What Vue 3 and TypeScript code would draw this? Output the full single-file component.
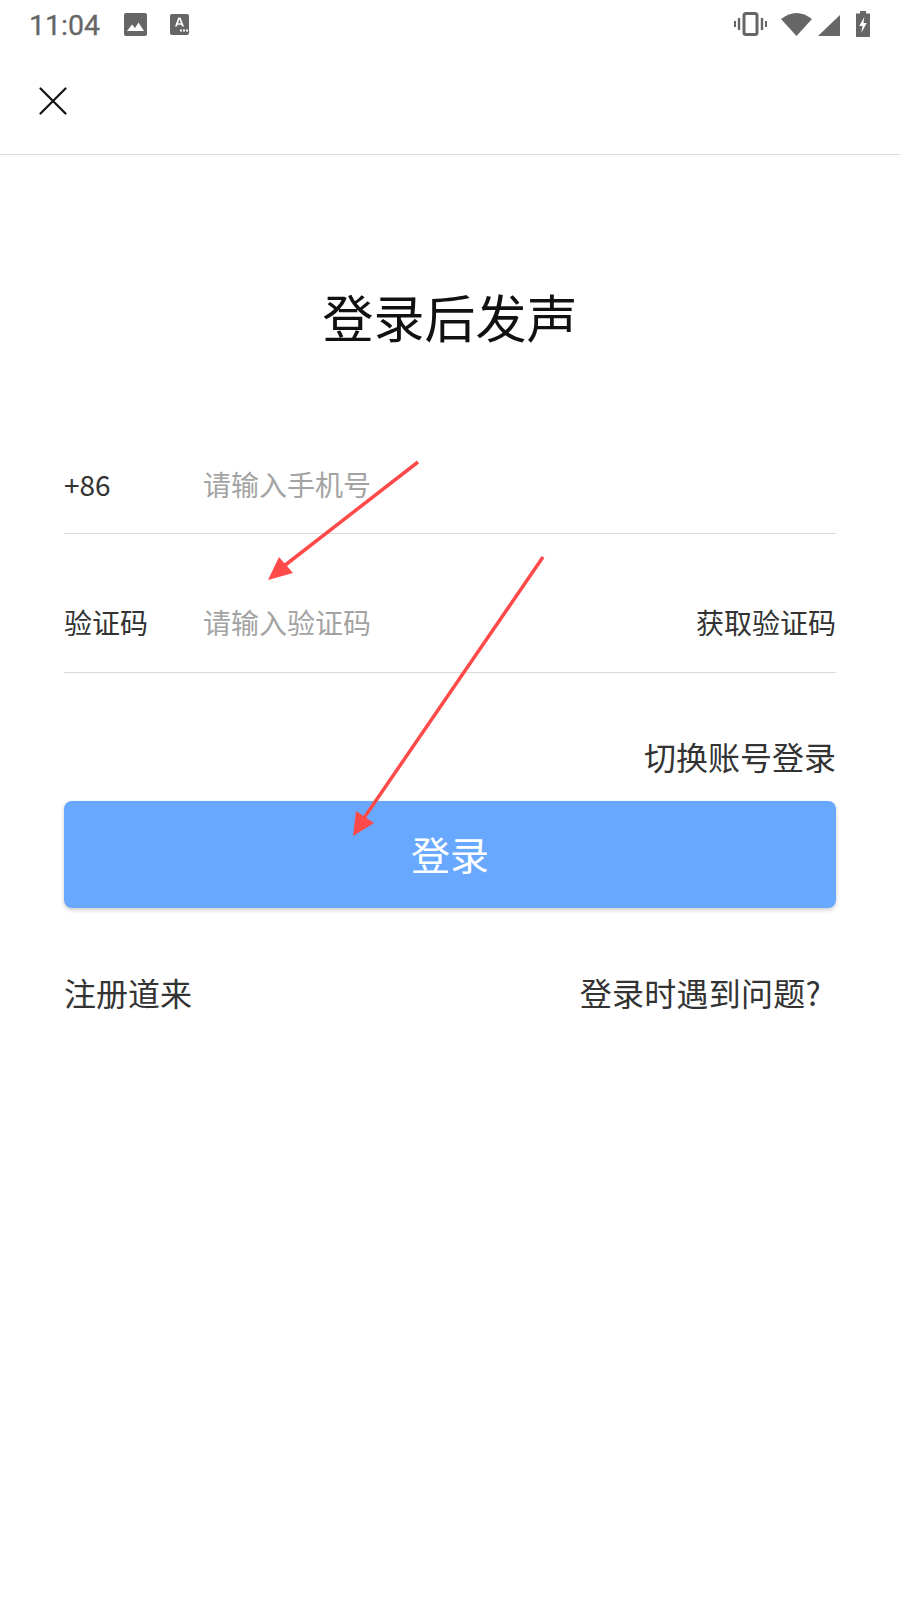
<template>
  <div class="page">
    <div class="status-bar">
      <span class="time">11:04</span>
      <svg class="ic-image" viewBox="0 0 23 23">
        <rect width="23" height="23" rx="2" fill="#666" />
        <path d="M3 18 L8 11.5 L11 15 L14.5 9.5 L20 18 Z" fill="#fff" />
      </svg>
      <svg class="ic-a" viewBox="0 0 19 21">
        <rect width="19" height="21" rx="2" fill="#666" />
        <path d="M5 12.5 L8.3 3.5 H10.5 L14 12.5 H12 L11.4 10.8 H7.500 L6.900 12.5 Z M8 9.2 H10.900 L9.400 5.400 Z" fill="#fff" fill-rule="evenodd" />
        <path d="M10 15.5h2v2h-2z M13 15.5h2v2h-2z M16 15.5h2v2h-2z" fill="#fff" />
      </svg>
      <div class="status-right">
        <svg class="ic-vibrate" viewBox="0 0 33 24">
          <rect x="10" y="1.500" width="13" height="21" rx="2" fill="none" stroke="#666" stroke-width="3" />
          <path d="M5 6v12 M28 6v12" stroke="#666" stroke-width="2.400" />
          <path d="M1 9v6 M32 9v6" stroke="#666" stroke-width="2" />
        </svg>
        <svg class="ic-wifi" viewBox="0 0 31 24">
          <path d="M0 7 Q15.500 -5 31 7 L15.500 24 Z" fill="#666" />
        </svg>
        <svg class="ic-signal" viewBox="0 0 22 21">
          <path d="M0 21 L22 0 V21 Z" fill="#666" />
        </svg>
        <svg class="ic-battery" viewBox="0 0 14 26">
          <path d="M4 0 H10 V2.500 H14 V26 H0 V2.500 H4 Z" fill="#666" />
          <path d="M8.300 6 L3.300 15 H6.500 L5.300 22 L10.700 12 H7.500 Z" fill="#fff" />
        </svg>
      </div>
    </div>

    <div class="toolbar">
      <svg class="ic-close" viewBox="0 0 28 28">
        <path d="M1.500 1.500 L26.500 26.500 M26.500 1.500 L1.500 26.500" stroke="#111" stroke-width="2.200" stroke-linecap="round" />
      </svg>
    </div>

    <h1 class="title">登录后发声</h1>

    <div class="form">
      <div class="field">
        <span class="field-label">+86</span>
        <span class="placeholder">请输入手机号</span>
      </div>
      <div class="field">
        <span class="field-label">验证码</span>
        <span class="placeholder">请输入验证码</span>
        <span class="get-code">获取验证码</span>
      </div>
      <div class="switch">切换账号登录</div>
      <button class="login-btn">登录</button>
      <div class="links">
        <span>注册道来</span>
        <span class="help">登录时遇到问题?</span>
      </div>
    </div>

    <!-- red annotation arrows on top of the screenshot -->
    <svg class="arrows" viewBox="0 0 900 1600">
      <path d="M418 462 L284 566 M543 557 L364 818" stroke="#ff4a4a" stroke-width="3.500" fill="none" />
      <path d="M268 580 L279 557 L293 573 Z M353 836 L356 811 L374 823 Z" fill="#ff4a4a" />
    </svg>
  </div>
</template>

<script setup lang="ts">
</script>

<style>
html,
body {
  margin: 0;
  background: #fff;
}
</style>

<style scoped>
.page {
  position: relative;
  width: 900px;
  height: 1600px;
  background: #fff;
  overflow: hidden;
  font-family: "Noto Sans CJK SC", "Noto Sans", sans-serif;
  color: #333;
}

.status-bar {
  display: flex;
  align-items: center;
  height: 48px;
  padding: 0 30px 0 29px;
  box-sizing: border-box;
}

.time {
  font-family: Roboto, sans-serif;
  font-size: 28.500px;
  color: #666;
  width: 95px;
  margin-top: 2px;
  -webkit-text-stroke: 0.3px #666;
}

.ic-image {
  width: 23px;
  height: 23px;
  margin-right: 23px;
}

.ic-a {
  width: 19px;
  height: 21px;
}

.status-right {
  margin-left: auto;
  display: flex;
  align-items: center;
}

.ic-vibrate {
  width: 33px;
  height: 24px;
  margin-right: 14px;
}

.ic-wifi {
  width: 31px;
  height: 24px;
  margin-right: 6px;
}

.ic-signal {
  width: 22px;
  height: 21px;
  margin-top: 3px;
  margin-right: 16px;
}

.ic-battery {
  width: 14px;
  height: 26px;
}

.toolbar {
  height: 107px;
  border-bottom: 1px solid #dcdcdc;
  display: flex;
  align-items: flex-start;
  padding: 39px 0 0 39px;
  box-sizing: border-box;
}

.ic-close {
  width: 28px;
  height: 28px;
}

.title {
  margin: 125px 0 0;
  font-size: 51px;
  line-height: 72px;
  font-weight: 400;
  color: #111;
  text-align: center;
}

.form {
  margin: 0 64px;
  padding-top: 82px;
}

.field {
  display: flex;
  align-items: center;
  height: 139px;
  padding-top: 38px;
  box-sizing: border-box;
  border-bottom: 1px solid #d9d9d9;
  font-size: 28px;
}

.field:first-child {
  height: 100px;
  padding-top: 0;
}

.field-label {
  width: 139px;
  flex-shrink: 0;
  color: #333;
}

.placeholder {
  color: #a3a3a3;
}

.get-code {
  margin-left: auto;
}

.switch {
  margin-top: 60px;
  font-size: 32px;
  line-height: 46px;
  text-align: right;
}

.login-btn {
  display: block;
  width: 100%;
  height: 107px;
  margin-top: 22px;
  padding: 0 0 3px;
  border: none;
  border-radius: 8px;
  background: #68a9ff;
  color: #fff;
  font-family: inherit;
  font-size: 39px;
  box-shadow: 0 2px 4px rgba(0, 0, 0, 0.2);
}

.links {
  display: flex;
  justify-content: space-between;
  margin-top: 61px;
  font-size: 32px;
  line-height: 46px;
}

.help {
  margin-right: 15px;
  letter-spacing: 0.25px;
}

.arrows {
  position: absolute;
  left: 0;
  top: 0;
  width: 900px;
  height: 1600px;
  pointer-events: none;
}
</style>
